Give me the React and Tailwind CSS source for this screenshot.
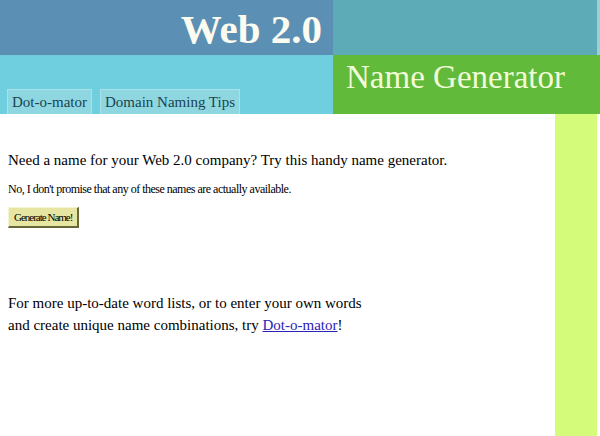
const App = () => {
  return (
    <div className="w-[600px] h-[436px] overflow-hidden bg-white font-['Liberation_Serif','DejaVu_Serif',serif]">
      {/* header */}
      <div className="grid grid-cols-[333px_1fr] grid-rows-[55px_59px]">
        <div className="bg-[#5b90b4] flex items-center justify-end pr-[11px]">
          <h1 className="text-[41px] font-bold text-[#fbfbf0] leading-none pt-[4px]">Web 2.0</h1>
        </div>
        <div className="bg-[#5eabb8] border-r-[3px] border-[#9ccfd6]"></div>
        <div className="bg-[#6fcfde] flex items-end gap-[8px] pl-[7px]">
          <a className="bg-[#8ed7e0] border border-b-0 border-[#a8e2e8] h-[25px] px-[4px] flex items-center text-[15px] text-[#1a4350]">Dot-o-mator</a>
          <a className="bg-[#8ed7e0] border border-b-0 border-[#a8e2e8] h-[25px] px-[4px] flex items-center text-[15px] text-[#1a4350]">Domain Naming Tips</a>
        </div>
        <div className="bg-[#62ba3a] pl-[13px] pt-[6px]">
          <h2 className="text-[33px] text-[#f2fcd8] leading-none">Name Generator</h2>
        </div>
      </div>

      {/* body */}
      <div className="flex h-[322px]">
        <div className="flex-1 pl-[8px] pt-[36px] text-black">
          <p className="text-[15px] leading-[20px]">Need a name for your Web 2.0 company? Try this handy name generator.</p>
          <p className="text-[12px] leading-[16px] mt-[11px] tracking-[-0.5px]">No, I don't promise that any of these names are actually available.</p>
          <button className="mt-[10px] h-[21px] px-[5px] bg-[#e6e6a2] border-t border-l border-t-[#f4f4d0] border-l-[#f4f4d0] border-r-2 border-b-2 border-r-[#66663a] border-b-[#66663a] text-[11px] tracking-[-1px] text-black leading-none">Generate Name!</button>
          <p className="text-[15px] leading-[22px] mt-[64px]">
            For more up-to-date word lists, or to enter your own words
            <br />
            and create unique name combinations, try{" "}
            <a href="#" className="text-[#2a23b8] underline">Dot-o-mator</a>!
          </p>
        </div>
        <div className="w-[42px] bg-[#d5fb7b]"></div>
        <div className="w-[3px] bg-white"></div>
      </div>
    </div>
  );
};

export default App;
